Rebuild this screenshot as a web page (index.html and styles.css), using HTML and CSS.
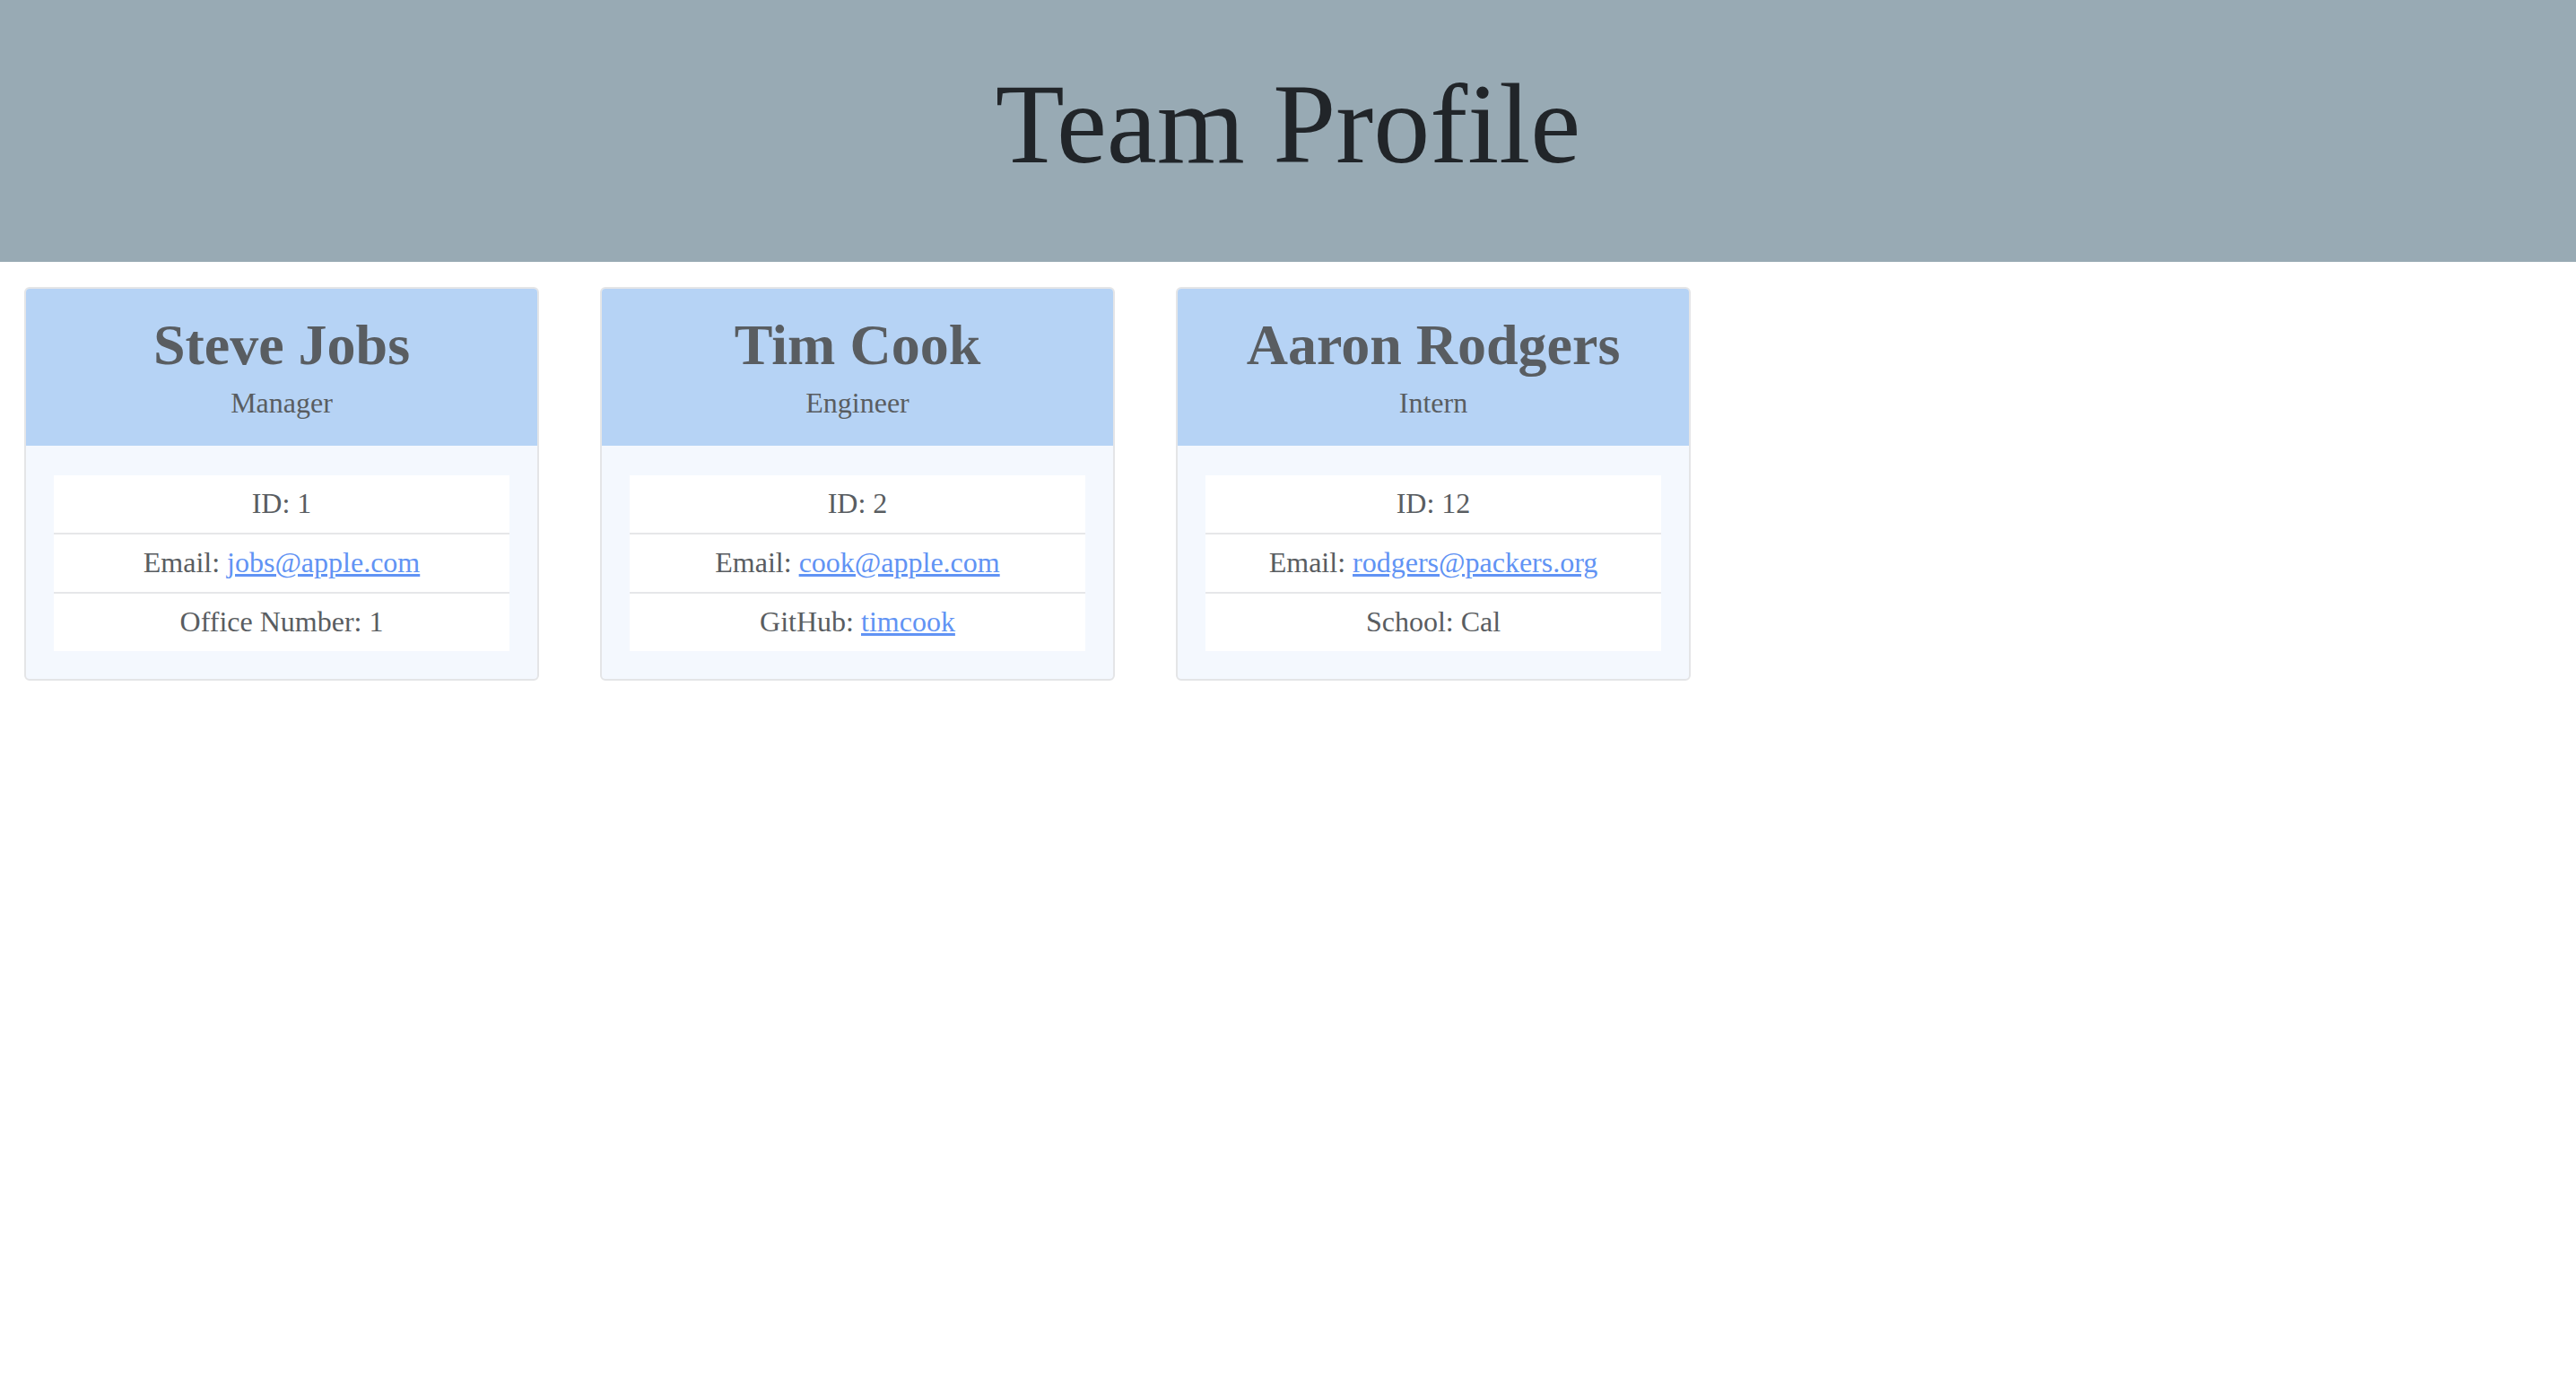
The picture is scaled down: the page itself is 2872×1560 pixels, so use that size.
FILE: index.html
```html
<!DOCTYPE html>
<html lang="en">
<head>
<meta charset="UTF-8">
<title>Team Profile</title>
<link rel="stylesheet" href="styles.css">
</head>
<body>
<header class="jumbo">
  <h1 class="jumbo-title">Team Profile</h1>
</header>
<main class="team">
  <div class="card">
    <div class="card-head">
      <h2 class="card-name">Steve Jobs</h2>
      <div class="card-role">Manager</div>
    </div>
    <div class="card-body">
      <ul class="info">
        <li class="info-item">ID: 1</li>
        <li class="info-item">Email: <a href="#">jobs@apple.com</a></li>
        <li class="info-item">Office Number: 1</li>
      </ul>
    </div>
  </div>
  <div class="card">
    <div class="card-head">
      <h2 class="card-name">Tim Cook</h2>
      <div class="card-role">Engineer</div>
    </div>
    <div class="card-body">
      <ul class="info">
        <li class="info-item">ID: 2</li>
        <li class="info-item">Email: <a href="#">cook@apple.com</a></li>
        <li class="info-item">GitHub: <a href="#">timcook</a></li>
      </ul>
    </div>
  </div>
  <div class="card">
    <div class="card-head">
      <h2 class="card-name">Aaron Rodgers</h2>
      <div class="card-role">Intern</div>
    </div>
    <div class="card-body">
      <ul class="info">
        <li class="info-item">ID: 12</li>
        <li class="info-item">Email: <a href="#">rodgers@packers.org</a></li>
        <li class="info-item">School: Cal</li>
      </ul>
    </div>
  </div>
</main>
</body>
</html>
```

FILE: styles.css
```css
* { box-sizing: border-box; }
body {
  margin: 0;
  font-family: "Liberation Serif", "Times New Roman", serif;
  background: #ffffff;
  color: #212529;
}
.jumbo {
  height: 292px;
  padding-top: 76px;
  background: #98aab4;
  text-align: center;
}
.jumbo-title {
  margin: 0;
  font-size: 126px;
  font-weight: normal;
  line-height: 1;
  color: #212529;
}
.team {
  display: flex;
  gap: 68px;
  padding: 28px 0 0 27px;
  align-items: flex-start;
}
.card {
  width: 574px;
  border: 2px solid #e4e5e7;
  border-radius: 6px;
  overflow: hidden;
  background: #f4f8fe;
  color: #595d61;
}
.card-head {
  background: #b6d3f5;
  text-align: center;
  padding: 31px 0 32px;
}
.card-name {
  margin: 0;
  font-size: 64px;
  font-weight: bold;
  line-height: 1;
}
.card-role {
  margin-top: 16px;
  font-size: 32px;
  line-height: 1;
}
.card-body {
  padding: 33px 31px 31px;
}
.info {
  list-style: none;
  margin: 0;
  padding: 0;
}
.info-item {
  background: #ffffff;
  height: 64px;
  line-height: 62px;
  font-size: 32px;
  text-align: center;
}
.info-item + .info-item {
  border-top: 2px solid #e6e7e9;
  height: 66px;
}
.info-item a {
  color: #6193f4;
  text-decoration: underline;
}
```
